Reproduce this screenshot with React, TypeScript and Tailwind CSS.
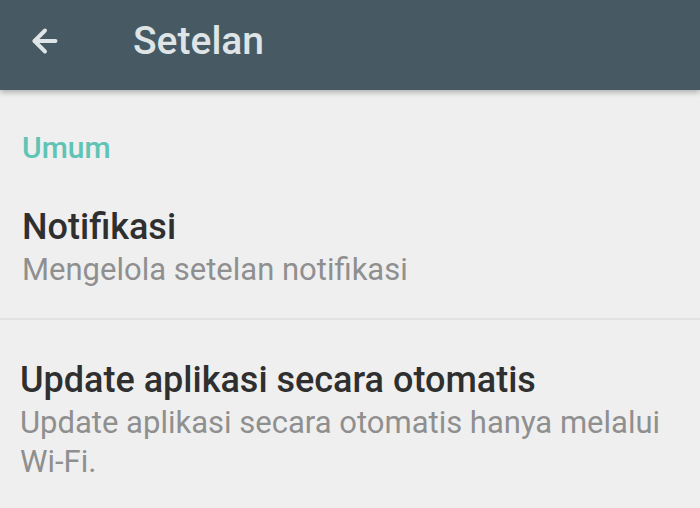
import { ArrowLeft } from "lucide-react";

export default function App() {
  return (
    <div className="w-[700px] h-[508px] overflow-hidden bg-[#efefef] font-['Roboto',_'Liberation_Sans',_sans-serif]">
      {/* Toolbar */}
      <header className="relative z-10 h-[90px] bg-[#475a63] flex items-center pb-[8px] shadow-[0_2px_6px_rgba(0,0,0,0.3)]">
        <ArrowLeft className="ml-[27px] text-[#dfe4e6]" size={36} strokeWidth={2.6} />
        <h1 className="ml-[70px] text-[39px] font-medium text-[#dfe4e6]">Setelan</h1>
      </header>

      {/* Section */}
      <div className="pt-[40px] px-[22px] text-[30px] leading-[36px] font-medium text-[#5fc4b4]">Umum</div>

      <div className="px-[22px] pt-[41px] pb-[28px] border-b-2 border-[#e2e2e2]">
        <div className="text-[36px] font-medium text-[#2f2f2f] leading-[40px]">Notifikasi</div>
        <div className="text-[31px] text-[#8f8f8f] leading-[40px] mt-[3px]">Mengelola setelan notifikasi</div>
      </div>

      <div className="px-[20px] pt-[40px]">
        <div className="text-[36px] font-medium text-[#2f2f2f] leading-[40px]">Update aplikasi secara otomatis</div>
        <div className="text-[31px] text-[#8f8f8f] leading-[39px] mt-[3px]">
          Update aplikasi secara otomatis hanya melalui Wi-Fi.
        </div>
      </div>
    </div>
  );
}
